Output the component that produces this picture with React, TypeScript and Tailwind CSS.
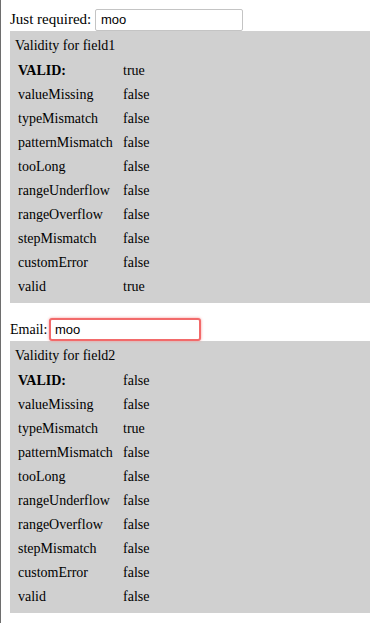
import React from "react";

type Field = {
  label: string;
  labelClass: string;
  name: string;
  value: string;
  inputWidth: string;
  invalid: boolean;
  flags: Record<string, boolean>;
};

const keys = [
  "valueMissing",
  "typeMismatch",
  "patternMismatch",
  "tooLong",
  "rangeUnderflow",
  "rangeOverflow",
  "stepMismatch",
  "customError",
  "valid",
];

const fields: Field[] = [
  {
    label: "Just required:",
    labelClass: "w-[85px] text-[15px]",
    name: "field1",
    value: "moo",
    inputWidth: "w-[148px]",
    invalid: false,
    flags: { valid: true },
  },
  {
    label: "Email:",
    labelClass: "w-[39px]",
    name: "field2",
    value: "moo",
    inputWidth: "w-[152px]",
    invalid: true,
    flags: { typeMismatch: true },
  },
];

function ValidityPanel({ field }: { field: Field }) {
  const valid = !!field.flags.valid;
  return (
    <div className="w-[360px] bg-[#d0d0d0] pt-[6px] pb-[5px] pl-[5px]">
      <div className="h-[18px] leading-[18px] mb-[3px]">Validity for {field.name}</div>
      <div className="pl-[3px]">
        <div className="flex h-[24px] items-center">
          <span className="w-[105px] font-bold">VALID:</span>
          <span>{valid ? "true" : "false"}</span>
        </div>
        {keys.map((k) => (
          <div key={k} className="flex h-[24px] items-center">
            <span className="w-[105px]">{k}</span>
            <span>{field.flags[k] ? "true" : "false"}</span>
          </div>
        ))}
      </div>
    </div>
  );
}

export default function App() {
  return (
    <div className="min-h-[623px] bg-white border-l border-[#6e6e6e] pl-[9px] pt-[8px] text-[14px] text-black font-['Liberation_Serif',serif]">
      {fields.map((f, i) => (
        <div key={f.name} className={i > 0 ? "mt-[15px]" : ""}>
          <div className="flex items-center h-[23px]">
            <span className={f.labelClass}>{f.label}</span>
            <input
              type="text"
              defaultValue={f.value}
              className={
                f.invalid
                  ? `${f.inputWidth} h-[23px] px-[4px] rounded-[3px] border-2 border-[#f26a6a] shadow-[0_0_3px_#f59a9a] outline-none text-[13px] font-['Liberation_Sans',sans-serif] bg-white`
                  : `${f.inputWidth} h-[22px] px-[5px] rounded-[2px] border border-[#c4c4c4] outline-none text-[13px] font-['Liberation_Sans',sans-serif] bg-white`
              }
            />
          </div>
          <ValidityPanel field={f} />
        </div>
      ))}
    </div>
  );
}
